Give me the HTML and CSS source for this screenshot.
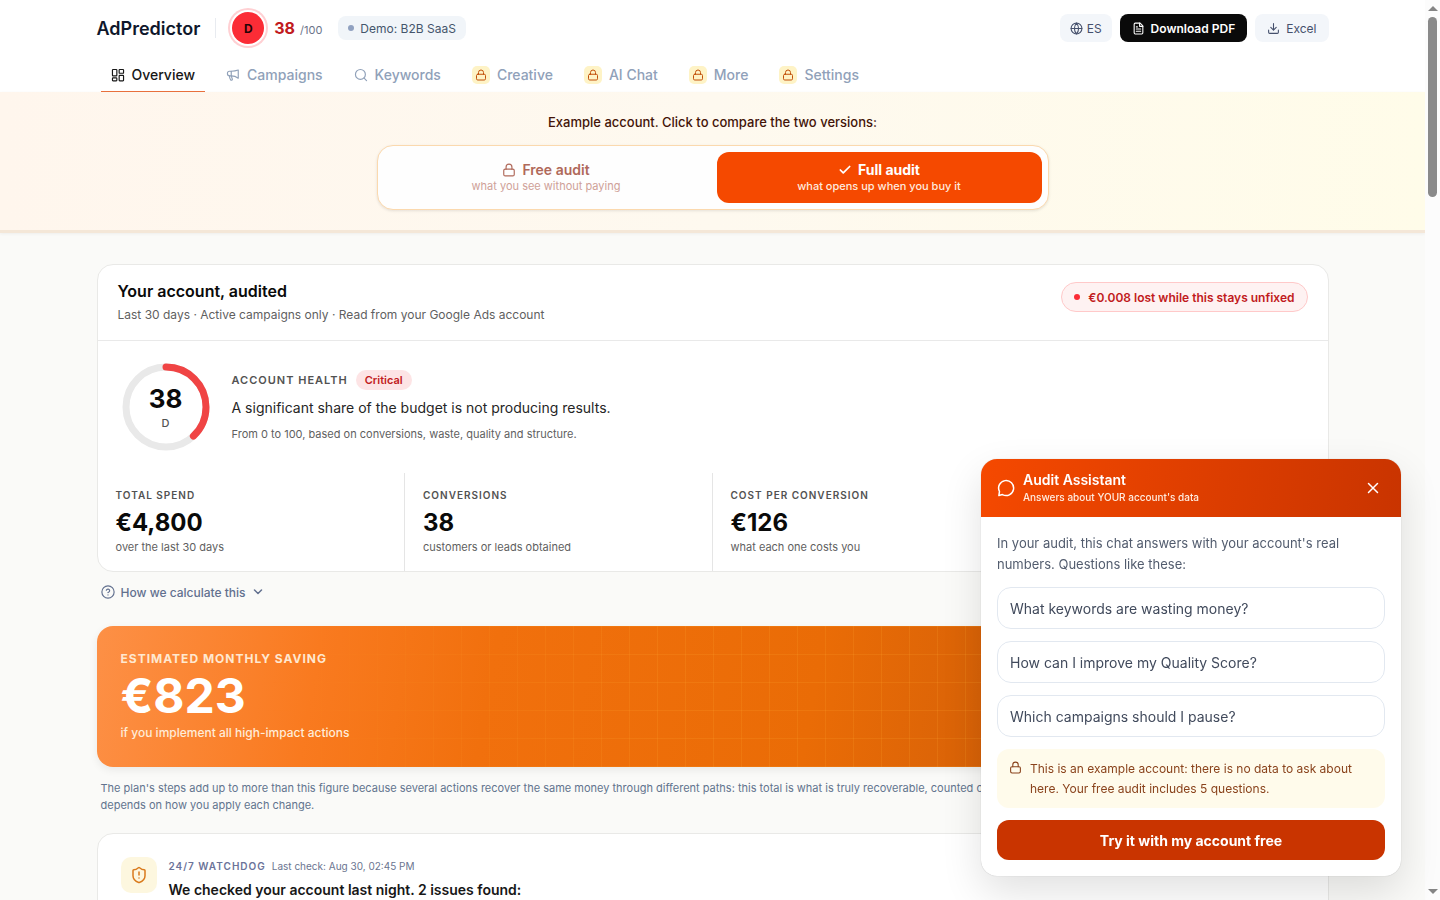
FILE: index.html
```
<!DOCTYPE html>
<html lang="en">
<head>
    <meta charset="UTF-8">
    <meta name="viewport" content="width=device-width, initial-scale=1.0">
    <title>AdPredictor - Overview</title>
    <link rel="stylesheet" href="styles.css">
</head>
<body>
    <!-- Shared icons -->
    <svg class="sprite" aria-hidden="true">
        <symbol id="i-lock" viewBox="0 0 24 24"><rect x="3" y="10.5" width="18" height="11.5" rx="2.5"/><path d="M7 10.5V7a5 5 0 0 1 10 0v3.5"/></symbol>
        <symbol id="i-grid" viewBox="0 0 24 24"><rect x="2.5" y="2.5" width="7.5" height="11" rx="1"/><rect x="14" y="2.5" width="7.5" height="6.5" rx="1"/><rect x="14" y="12.5" width="7.5" height="9.5" rx="1"/><rect x="2.5" y="17" width="7.5" height="5" rx="1"/></symbol>
        <symbol id="i-megaphone" viewBox="0 0 24 24"><path d="M21 3.5v14c-4-3-8-4-12-4H6a3.5 3.5 0 0 1-3.500-3.500V9A3.500 3.500 0 0 1 6 5.500h3c4 0 8-.5 12-2z"/><path d="M9 5.500v8"/><path d="M6 13.500c0 2.500.5 5 2 7 .7.900 3 .5 3-1.200 0-1.300-1.500-2.300-1.500-5.800"/></symbol>
        <symbol id="i-search" viewBox="0 0 24 24"><circle cx="11" cy="11" r="8.500"/><path d="m21.500 21.500-4.200-4.200"/></symbol>
        <symbol id="i-globe" viewBox="0 0 24 24"><circle cx="12" cy="12" r="10"/><path d="M12 2a15 15 0 0 0 0 20 15 15 0 0 0 0-20M2 12h20"/></symbol>
        <symbol id="i-file" viewBox="0 0 24 24"><path d="M15 2H6a2 2 0 0 0-2 2v16a2 2 0 0 0 2 2h12a2 2 0 0 0 2-2V7z"/><path d="M14 2v6h6M8 13h8M8 17h8M8 9h2"/></symbol>
        <symbol id="i-download" viewBox="0 0 24 24"><path d="M21 15v4a2 2 0 0 1-2 2H5a2 2 0 0 1-2-2v-4M7 10l5 5 5-5M12 15V3"/></symbol>
        <symbol id="i-check" viewBox="0 0 24 24"><path d="M20 6 9 17l-5-5"/></symbol>
        <symbol id="i-help" viewBox="0 0 24 24"><circle cx="12" cy="12" r="10.500"/><path d="M9.100 9a3 3 0 0 1 5.800 1c0 2-3 3-3 3M12 17h.01"/></symbol>
        <symbol id="i-chevron" viewBox="0 0 24 24"><path d="m5 8 7 7 7-7"/></symbol>
        <symbol id="i-shield" viewBox="0 0 24 24"><path d="M20 13c0 5-3.500 7.500-7.660 8.950a1 1 0 0 1-.67-.01C7.500 20.500 4 18 4 13V6a1 1 0 0 1 1-1c2 0 4.500-1.200 6.240-2.720a1.170 1.170 0 0 1 1.520 0C14.510 3.810 17 5 19 5a1 1 0 0 1 1 1zM12 8v4M12 16h.01"/></symbol>
        <symbol id="i-chat" viewBox="0 0 24 24"><path d="M3.300 16.700A10 10 0 1 1 7.300 20.800L2.500 22z"/></symbol>
        <symbol id="i-close" viewBox="0 0 24 24"><path d="M18 6 6 18M6 6l12 12"/></symbol>
    </svg>

    <div class="page">
        <header class="header">
            <div class="container">
                <div class="topbar">
                    <a href="#" class="brand">AdPredictor</a>
                    <div class="score">
                        <span class="grade">D</span>
                        <strong>38</strong>
                        <span class="out-of">/100</span>
                    </div>
                    <span class="demo-chip">Demo: B2B SaaS</span>
                    <div class="actions">
                        <button type="button" class="btn btn-lang"><svg class="icon"><use href="#i-globe"/></svg>ES</button>
                        <button type="button" class="btn btn-dark"><svg class="icon"><use href="#i-file"/></svg>Download PDF</button>
                        <button type="button" class="btn"><svg class="icon"><use href="#i-download"/></svg>Excel</button>
                    </div>
                </div>
                <nav class="tabs">
                    <a href="#" class="tab active"><svg class="icon"><use href="#i-grid"/></svg>Overview</a>
                    <a href="#" class="tab"><svg class="icon"><use href="#i-megaphone"/></svg>Campaigns</a>
                    <a href="#" class="tab"><svg class="icon"><use href="#i-search"/></svg>Keywords</a>
                    <a href="#" class="tab"><span class="lock"><svg class="icon"><use href="#i-lock"/></svg></span>Creative</a>
                    <a href="#" class="tab"><span class="lock"><svg class="icon"><use href="#i-lock"/></svg></span>AI Chat</a>
                    <a href="#" class="tab"><span class="lock"><svg class="icon"><use href="#i-lock"/></svg></span>More</a>
                    <a href="#" class="tab"><span class="lock"><svg class="icon"><use href="#i-lock"/></svg></span>Settings</a>
                </nav>
            </div>
        </header>

        <!-- Free / full switch -->
        <section class="compare">
            <p class="compare-title">Example account. Click to compare the two versions:</p>
            <div class="switch">
                <button type="button" class="option">
                    <span class="option-name"><svg class="icon"><use href="#i-lock"/></svg>Free audit</span>
                    <span class="option-sub">what you see without paying</span>
                </button>
                <button type="button" class="option selected">
                    <span class="option-name"><svg class="icon"><use href="#i-check"/></svg>Full audit</span>
                    <span class="option-sub">what opens up when you buy it</span>
                </button>
            </div>
        </section>

        <main class="container main">
            <section class="card">
                <div class="card-head">
                    <div>
                        <h1>Your account, audited</h1>
                        <p>Last 30 days · Active campaigns only · Read from your Google Ads account</p>
                    </div>
                    <span class="lost-chip">€0.008 lost while this stays unfixed</span>
                </div>
                <div class="health">
                    <div class="gauge">
                        <svg viewBox="0 0 88 88">
                            <circle class="track" cx="44" cy="44" r="40"/>
                            <circle class="value" cx="44" cy="44" r="40" pathLength="100" stroke-dasharray="38 100"/>
                        </svg>
                        <div class="gauge-text">
                            <strong>38</strong>
                            <span>D</span>
                        </div>
                    </div>
                    <div class="health-text">
                        <div class="health-label"><h2 class="label">Account health</h2><span class="critical">Critical</span></div>
                        <p class="lead">A significant share of the budget is not producing results.</p>
                        <p class="hint">From 0 to 100, based on conversions, waste, quality and structure.</p>
                    </div>
                </div>
                <div class="stats">
                    <div class="stat">
                        <h3 class="label">Total spend</h3>
                        <strong>€4,800</strong>
                        <p class="hint">over the last 30 days</p>
                    </div>
                    <div class="stat">
                        <h3 class="label">Conversions</h3>
                        <strong>38</strong>
                        <p class="hint">customers or leads obtained</p>
                    </div>
                    <div class="stat">
                        <h3 class="label">Cost per conversion</h3>
                        <strong>€126</strong>
                        <p class="hint">what each one costs you</p>
                    </div>
                    <div class="stat"></div>
                </div>
            </section>

            <button type="button" class="explain"><svg class="icon"><use href="#i-help"/></svg>How we calculate this<svg class="icon chevron"><use href="#i-chevron"/></svg></button>

            <section class="saving">
                <h2>Estimated monthly saving</h2>
                <strong>€823</strong>
                <p>if you implement all high-impact actions</p>
            </section>
            <p class="note">The plan's steps add up to more than this figure because several actions recover the same money through different paths: this total is what is truly recoverable, counted once. The final result<br>depends on how you apply each change.</p>

            <section class="card watchdog">
                <span class="shield"><svg class="icon"><use href="#i-shield"/></svg></span>
                <div>
                    <p class="watch-meta"><b>24/7 WATCHDOG</b>Last check: Aug 30, 02:45 PM</p>
                    <h2>We checked your account last night. 2 issues found:</h2>
                </div>
            </section>
        </main>
    </div>

    <!-- Scrollbar -->
    <div class="scrollbar" aria-hidden="true">
        <i class="arrow up"></i>
        <i class="thumb"></i>
        <i class="arrow down"></i>
    </div>

    <!-- Chat widget -->
    <aside class="chat">
        <div class="chat-head">
            <svg class="icon"><use href="#i-chat"/></svg>
            <div>
                <h2>Audit Assistant</h2>
                <p>Answers about YOUR account's data</p>
            </div>
            <button type="button" class="close" aria-label="Close"><svg class="icon"><use href="#i-close"/></svg></button>
        </div>
        <div class="chat-body">
            <p class="intro">In your audit, this chat answers with your account's real numbers. Questions like these:</p>
            <button type="button" class="question">What keywords are wasting money?</button>
            <button type="button" class="question">How can I improve my Quality Score?</button>
            <button type="button" class="question">Which campaigns should I pause?</button>
            <div class="chat-note">
                <svg class="icon"><use href="#i-lock"/></svg>
                <p>This is an example account: there is no data to ask about here. Your free audit includes 5 questions.</p>
            </div>
            <button type="button" class="try">Try it with my account free</button>
        </div>
    </aside>
</body>
</html>
```
FILE: styles.css
```
* { margin: 0; padding: 0; box-sizing: border-box; }
body {
    font-family: Inter, "Open Sans", "Liberation Sans", sans-serif;
    background: #fafaf8;
    color: #0a0a0a;
    display: grid;
    grid-template-columns: minmax(0, 1fr) 15px;
    height: 100vh;
    overflow: hidden;
}
button { font: inherit; color: inherit; border: none; background: none; cursor: pointer; }
a { color: inherit; text-decoration: none; }
.sprite { display: none; }
.icon {
    width: 14px;
    height: 14px;
    flex: none;
    fill: none;
    stroke: currentColor;
    stroke-width: 2;
    stroke-linecap: round;
    stroke-linejoin: round;
}
.page { height: 100vh; overflow: hidden; }
.container { max-width: 1280px; margin: 0 auto; padding: 0 24px; }

/* Header */
.header { background: #fff; }
.topbar { display: flex; align-items: center; height: 56px; }
.brand { font-size: 18px; font-weight: 600; color: #0f172b; padding-right: 15px; }
.score { display: flex; align-items: center; border-left: 1px solid #e8ebf0; height: 20px; padding-left: 16px; }
.grade {
    width: 32px;
    height: 32px;
    border-radius: 50%;
    background: #fb2c36;
    box-shadow: 0 0 0 2px #fff, 0 0 0 4px #ffd0d3;
    display: flex;
    align-items: center;
    justify-content: center;
    font-size: 12px;
    font-weight: 700;
    color: #240306;
}
.score strong { font-size: 16px; color: #c11a20; margin-left: 10px; }
.out-of { font-size: 11px; color: #6b7489; margin-left: 5px; padding-top: 3px; }
.demo-chip {
    display: flex;
    align-items: center;
    gap: 6px;
    height: 24px;
    margin-left: 16px;
    padding: 0 10px;
    border-radius: 8px;
    background: #f1f5f9;
    color: #45556c;
    font-size: 12px;
}
.demo-chip::before { content: ""; width: 6px; height: 6px; border-radius: 50%; background: #90a1c0; }
.actions { display: flex; gap: 8px; margin-left: auto; }
.btn {
    display: flex;
    align-items: center;
    gap: 6px;
    height: 28px;
    padding: 0 12px;
    border-radius: 8px;
    background: #f3f6fa;
    color: #45506c;
    font-size: 12px;
}
.btn .icon { width: 13px; height: 13px; }
.btn-lang { padding: 0 10px; gap: 4px; }
.btn-dark { background: #0a0a0a; color: #fff; font-weight: 600; }

.tabs { display: flex; gap: 11px; padding-left: 4px; }
.tab {
    display: flex;
    align-items: center;
    gap: 7px;
    height: 36px;
    padding: 2px 10px 0;
    border-bottom: 1px solid transparent;
    color: #90a1b9;
    font-size: 14px;
    font-weight: 500;
}
.tab.active { color: #171717; border-color: #e8703c; }
.lock {
    width: 18px;
    height: 18px;
    border-radius: 5px;
    background: #fef3c6;
    color: #c2500a;
    display: flex;
    align-items: center;
    justify-content: center;
}
.lock .icon { width: 12px; height: 12px; }

/* Free / full switch */
.compare {
    height: 141px;
    padding: 20px 24px 0;
    background: linear-gradient(90deg, #fff6ed, #fef9ef 50%, #fffce9);
    border-bottom: 3px solid #f4e7d8;
    box-shadow: 0 1px 3px rgba(0, 0, 0, 0.05);
}
.compare-title { font-size: 13px; line-height: 20px; font-weight: 500; color: #431407; text-align: center; }
.switch {
    display: grid;
    grid-template-columns: 1fr 1fr;
    gap: 8px;
    max-width: 672px;
    margin: 13px auto 0;
    padding: 6px;
    background: #fefefe;
    border: 1px solid #fbd9ae;
    border-radius: 16px;
    box-shadow: 0 1px 3px rgba(0, 0, 0, 0.1);
}
.option { height: 51px; border-radius: 12px; color: #b0695a; }
.option-name { display: flex; align-items: center; justify-content: center; gap: 6px; font-size: 14px; line-height: 18px; font-weight: 600; }
.option-sub { display: block; font-size: 11px; line-height: 15px; color: #cfa198; }
.option.selected { background: #f54900; color: #fff; }
.option.selected .option-name { font-weight: 700; }
.option.selected .option-sub { color: #ffeadf; font-weight: 500; }
.selected .icon { stroke-width: 3; }

/* Account card */
.main { padding-top: 31px; }
.card { background: #fff; border: 1px solid #e9e9e7; border-radius: 16px; }
.card-head { display: flex; justify-content: space-between; align-items: flex-start; height: 76px; padding: 15px 20px 0; border-bottom: 1px solid #e9e9e9; }
.card-head h1 { font-size: 16px; line-height: 22px; font-weight: 600; }
.card-head p { font-size: 12px; line-height: 20px; margin-top: 3px; color: #5f5f5f; }
.lost-chip {
    display: flex;
    align-items: center;
    gap: 8px;
    height: 30px;
    margin-top: 2px;
    padding: 0 12px;
    border: 1px solid #ffc9c9;
    border-radius: 15px;
    background: #fef2f2;
    color: #c11a20;
    font-size: 12px;
    font-weight: 600;
}
.lost-chip::before { content: ""; width: 6px; height: 6px; border-radius: 50%; background: #fb2c36; }
.label { font-size: 11px; line-height: 16px; font-weight: 600; letter-spacing: 1px; text-transform: uppercase; color: #525252; }
.hint { font-size: 11px; line-height: 16px; color: #5f5f5f; }
.health { display: flex; align-items: center; gap: 22px; height: 132px; padding: 0 24px; }
.gauge { position: relative; width: 88px; height: 88px; }
.gauge svg { display: block; transform: rotate(-90deg); }
.gauge circle { fill: none; stroke-width: 7; }
.gauge .track { stroke: #e9e9e9; }
.gauge .value { stroke: #f04444; stroke-linecap: round; }
.gauge-text { position: absolute; inset: 0; display: flex; flex-direction: column; align-items: center; justify-content: center; gap: 2px; }
.gauge-text strong { font-size: 26px; line-height: 30px; }
.gauge-text span { font-size: 11px; line-height: 14px; font-weight: 500; color: #525252; }
.health-text { padding-bottom: 2px; }
.health-label { display: flex; align-items: center; gap: 8px; }
.critical { height: 20px; padding: 0 9px; border-radius: 10px; background: #fde4e5; color: #c11a20; font-size: 11px; line-height: 20px; font-weight: 600; }
.lead { font-size: 14px; line-height: 22px; margin: 7px 0; color: #262626; }
.stats { display: grid; grid-template-columns: repeat(4, 1fr); }
.stat { height: 98px; padding: 14px 18px 0; border-right: 1px solid #e5e5e5; }
.stat:last-child { border-right: none; }
.stat .label { font-size: 10px; }
.stat strong { display: block; font-size: 24px; line-height: 32px; margin-top: 4px; }
.explain { display: flex; align-items: center; gap: 6px; padding: 0 4px; margin-top: 10px; height: 20px; font-size: 12px; font-weight: 500; color: #62708f; }
.explain .chevron { width: 12px; height: 12px; stroke-width: 3; }

/* Saving banner */
.saving {
    position: relative;
    height: 141px;
    margin-top: 24px;
    padding: 24px 24px 0;
    border-radius: 16px;
    overflow: hidden;
    background: linear-gradient(100deg, #fd9046, #f97a1f 18%, #f1700d 32%, #ea6c06 58%, #cf5d08 80%);
    box-shadow: 0 3px 8px rgba(0, 0, 0, 0.07);
    color: #fff;
}
.saving::before {
    content: "";
    position: absolute;
    inset: 0;
    background-image: linear-gradient(rgba(255, 170, 50, 0.18) 1px, transparent 1px), linear-gradient(90deg, rgba(255, 170, 50, 0.18) 1px, transparent 1px);
    background-size: 28px 28px;
    -webkit-mask-image: linear-gradient(90deg, transparent 14%, #000 45%);
    mask-image: linear-gradient(90deg, transparent 14%, #000 45%);
}
.saving h2 { font-size: 12px; line-height: 18px; font-weight: 700; letter-spacing: 1px; text-transform: uppercase; color: #ffe8d0; }
.saving strong { display: block; font-size: 48px; line-height: 56px; font-weight: 700; }
.saving p { font-size: 12px; line-height: 18px; font-weight: 500; color: #ffecd8; }
.note { margin-top: 13px; padding: 0 4px; font-size: 11px; line-height: 17px; color: #62748e; white-space: nowrap; }

/* Watchdog */
.watchdog { display: flex; gap: 12px; margin-top: 19px; padding: 23px; height: 180px; }
.shield { width: 36px; height: 36px; border-radius: 10px; background: #fdf7df; color: #d97a1c; display: flex; align-items: center; justify-content: center; }
.shield .icon { width: 18px; height: 18px; }
.watch-meta { font-size: 10px; line-height: 18px; color: #6b7590; }
.watch-meta b { font-weight: 600; letter-spacing: 1px; margin-right: 6px; color: #6b7399; }
.watchdog h2 { font-size: 14px; line-height: 20px; margin-top: 5px; font-weight: 600; color: #171717; }

/* Scrollbar */
.scrollbar { display: flex; flex-direction: column; align-items: center; background: #fcfcfc; padding: 6px 0; }
.arrow { border: 5px solid transparent; }
.arrow.up { border-top: 0; border-bottom-color: #858585; }
.arrow.down { border-bottom: 0; border-top-color: #858585; margin-top: auto; }
.thumb { width: 9px; height: 20vh; margin-top: 6px; border-radius: 5px; background: #8a8a8a; }

/* Chat widget */
.chat {
    position: fixed;
    right: 39px;
    bottom: 24px;
    width: 420px;
    border-radius: 16px;
    overflow: hidden;
    background: #fff;
    box-shadow: 0 0 1px rgba(0, 0, 0, 0.3), 0 16px 40px rgba(0, 0, 0, 0.12);
}
.chat-head { display: flex; align-items: center; gap: 8px; height: 58px; padding: 0 16px; background: linear-gradient(100deg, #f54900, #c93400); color: #fff; }
.chat-head .icon { width: 18px; height: 18px; }
.chat-head h2 { font-size: 14px; line-height: 18px; font-weight: 600; }
.chat-head p { font-size: 10px; line-height: 16px; font-weight: 500; color: #ffecdf; }
.close { margin-left: auto; width: 24px; height: 24px; display: flex; align-items: center; justify-content: center; }
.chat-head .close .icon { width: 18px; height: 18px; }
.chat-body { display: flex; flex-direction: column; gap: 12px; padding: 16px; }
.intro { font-size: 13px; line-height: 21px; color: #525c6e; }
.question { height: 42px; padding: 0 12px; border: 1px solid #e2e8f0; border-radius: 14px; color: #414a5c; font-size: 14px; text-align: left; }
.chat-note { display: flex; gap: 8px; padding: 10px 12px 9px; border-radius: 12px; background: #fffbeb; color: #8a431c; }
.chat-note .icon { width: 13px; height: 13px; margin-top: 2px; }
.chat-note p { font-size: 12px; line-height: 20px; }
.try { height: 40px; border-radius: 12px; background: #c93400; color: #fff; font-size: 14px; font-weight: 700; }
```
